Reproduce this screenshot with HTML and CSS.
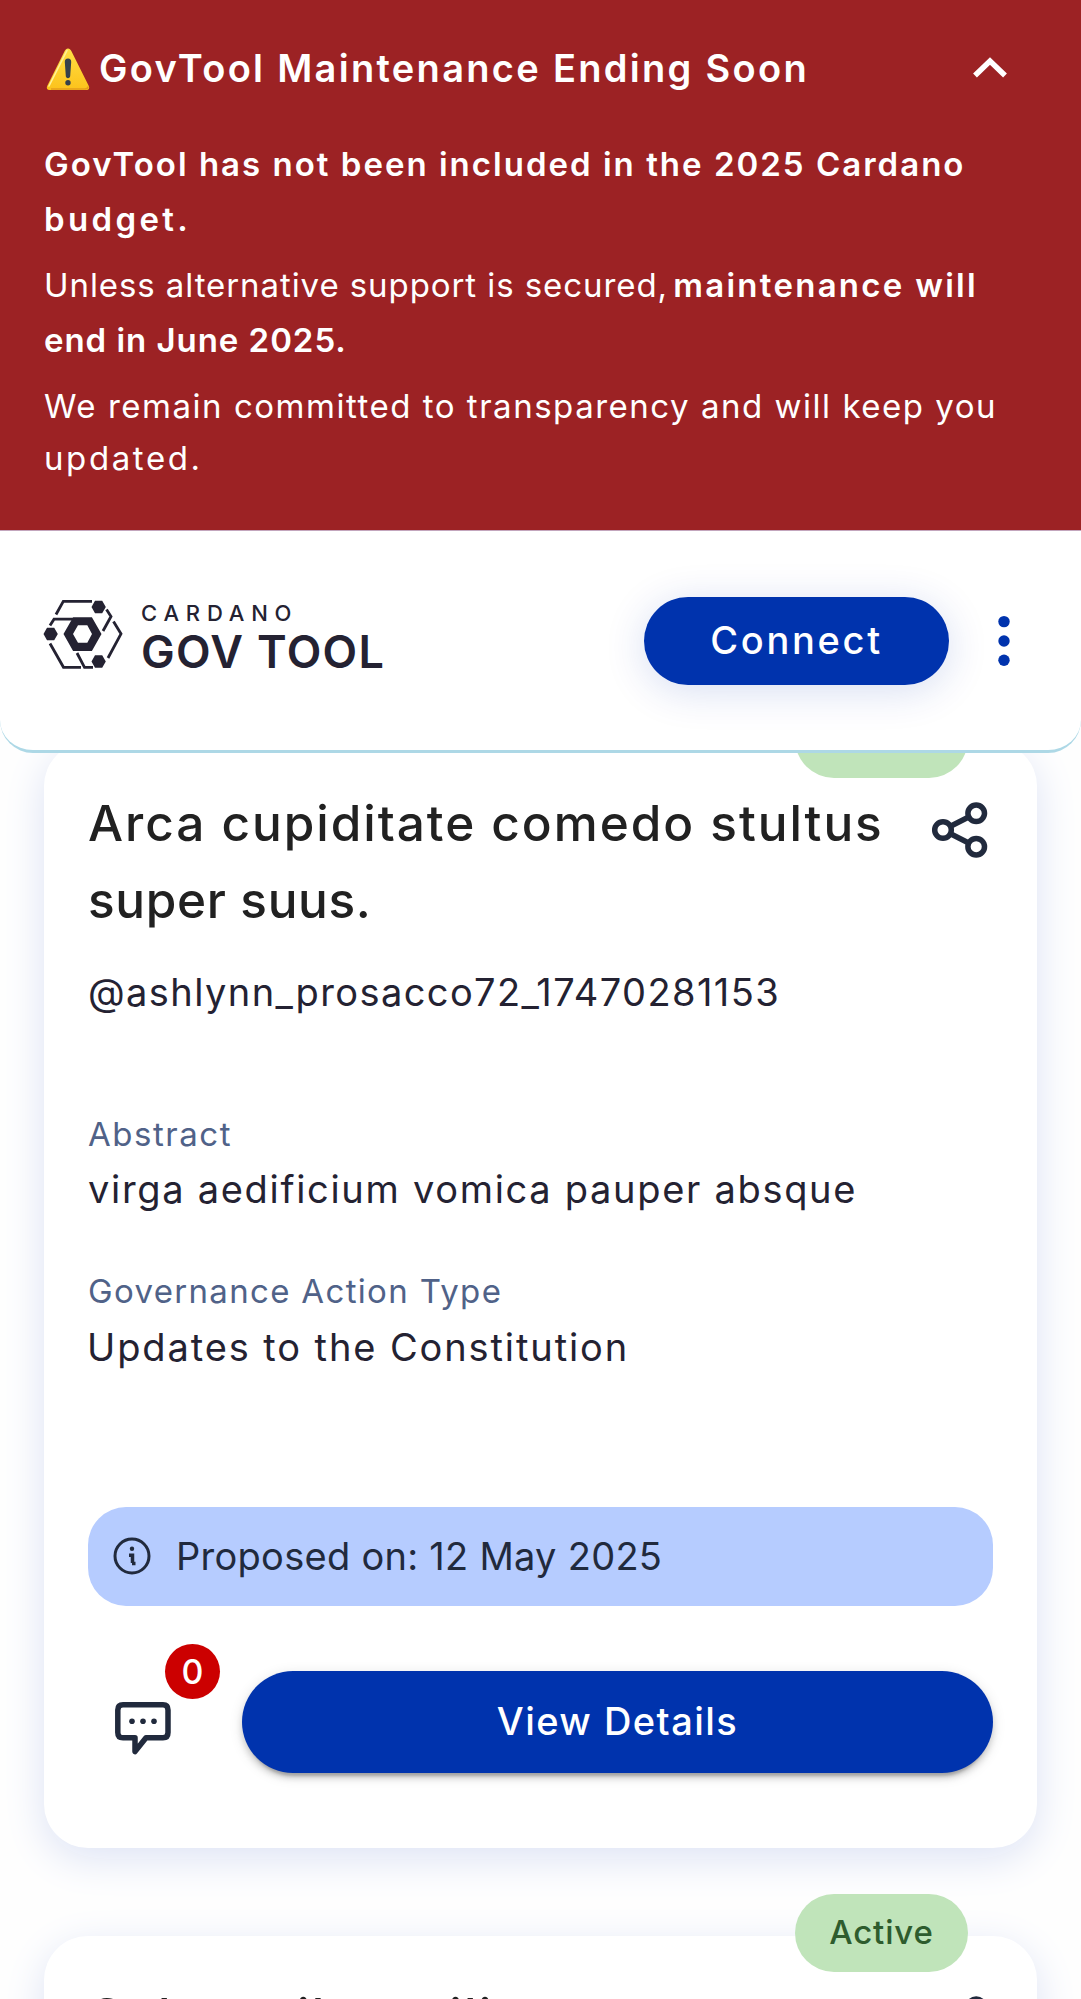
FILE: index.html
```html
<!DOCTYPE html>
<html lang="en">
<head>
<meta charset="utf-8">
<title>GovTool</title>
<link rel="stylesheet" href="styles.css">
</head>
<body>
<section class="banner">
  <div class="banner-head">
    <svg class="warning" width="44" height="44" viewBox="0 0 44 44">
      <defs><linearGradient id="amber" x1="0" y1="0" x2="0" y2="1"><stop offset="0" stop-color="#ffdf45"/><stop offset="1" stop-color="#fcc21b"/></linearGradient></defs>
      <path d="M22 1.500c1.500 0 2.500 1 3.200 2.300L42.800 39c1 2 .2 4-2.300 4h-37C1 43 .2 41 1.200 39L18.800 3.800C19.500 2.500 20.500 1.500 22 1.500z" fill="url(#amber)"/>
      <path d="M21 3.500L3 39" stroke="#fff199" stroke-width="1.600" stroke-linecap="round"/>
      <path d="M42 39.500q0 2.500-3 2.500H5" stroke="#e59d1b" stroke-width="1.500" fill="none"/>
      <path d="M22 11.500c2.200 0 3.300 1.300 3.200 3.400l-1 14.200c-.1 1.400-1 2.100-2.200 2.100s-2.100-.7-2.200-2.100l-1-14.200c-.1-2.100 1-3.400 3.200-3.400z" fill="#35404b"/>
      <circle cx="22" cy="35.700" r="2.700" fill="#35404b"/>
    </svg>
    <h1 class="banner-title">GovTool Maintenance Ending Soon</h1>
    <svg class="chevron" width="36" height="22" viewBox="0 0 36 22"><path d="M3 18.500L18 4l15 14.500" fill="none" stroke="#fff" stroke-width="5.500"/></svg>
  </div>
  <p class="para strong"><span class="ls-a">GovTool has not been included in the 2025 Cardano</span><br><span class="ls-b">budget.</span></p>
  <p class="para"><span class="ls-c">Unless alternative support is secured,</span> <b class="ls-d">maintenance will</b><br><b class="ls-e">end in June 2025.</b></p>
  <p class="para last"><span class="ls-f">We remain committed to transparency and will keep you</span><br><span class="ls-g">updated.</span></p>
</section>
<header class="header">
  <div class="logo">
    <svg width="80" height="70" viewBox="0 0 80 70" fill="none" stroke="#242232" stroke-width="2.800">
      <path d="M13 15.500L20.300 2.400H49M63.500 10.500L68 17.500 60 32M7 26.500L11 20.200H30M7 44.500L20.500 68.300H38M34 54L41.500 68.300H50M70.500 22.500L78 34.800 65 59"/>
      <g fill="#242232" stroke="none">
        <path d="M48.500 8l3.500-6.300h7.200L62.800 8l-3.600 6.300H52zM.5 35l3.500-6.300h7.200L14.800 35l-3.600 6.300H4zM48.500 62.500l3.500-6.300h7.200l3.600 6.300-3.600 6.300H52z"/>
        <path fill-rule="evenodd" d="M20.500 35l9.600-16.800h18.800L58.500 35l-9.600 17H30.100zM30 35l5 8.700h9.300L49 35l-4.700-8.700H35z"/>
      </g>
    </svg>
    <div class="wordmark"><span class="brand">CARDANO</span><span class="product">GOV TOOL</span></div>
  </div>
  <button class="connect">Connect</button>
  <svg class="menu" width="14" height="52" viewBox="0 0 14 52" fill="#0033ad"><circle cx="7" cy="6.600" r="5.700"/><circle cx="7" cy="26" r="5.700"/><circle cx="7" cy="45.200" r="5.700"/></svg>
</header>
<main class="list">
  <article class="card">
    <span class="status">Active</span>
    <div class="card-head">
      <h2 class="title"><span class="ls-h">Arca cupiditate comedo stultus</span><br><span class="ls-i">super suus.</span></h2>
      <svg class="share" width="58" height="58" viewBox="0 0 58 58" fill="none" stroke="#212a3d" stroke-width="5.500"><circle cx="12" cy="29" r="8.300"/><circle cx="45.200" cy="12.300" r="8.300"/><circle cx="45.200" cy="45.700" r="8.300"/><path d="M19.500 25.200L37.700 16M19.500 32.800L37.700 42"/></svg>
    </div>
    <p class="value author">@ashlynn_prosacco72_17470281153</p>
    <p class="label ls-k">Abstract</p>
    <p class="value abstract">virga aedificium vomica pauper absque</p>
    <p class="label type-label">Governance Action Type</p>
    <p class="value type">Updates to the Constitution</p>
    <div class="proposed">
      <svg width="38" height="38" viewBox="0 0 38 38" fill="none" stroke="#212a3d"><circle cx="19" cy="19" r="17" stroke-width="3"/><path d="M16 18.300h3.500V26M19 26.500h3.500" stroke-width="3.500"/><circle cx="19" cy="11.800" r="2.200" fill="#212a3d" stroke="none"/></svg>
      <span>Proposed on: 12 May 2025</span>
    </div>
    <div class="actions">
      <div class="comments">
        <svg width="56" height="54" viewBox="0 0 56 54" fill="none" stroke="#212a3d" stroke-width="5.500" stroke-linejoin="round"><path d="M8 2.800H48Q53 2.800 53 8V30.500Q53 35.800 48 35.800H31L20 49.500V35.800H8Q2.800 35.800 2.800 30.500V8Q2.800 2.800 8 2.800z"/><g fill="#212a3d" stroke="none"><circle cx="17" cy="19.300" r="2.800"/><circle cx="28" cy="19.300" r="2.800"/><circle cx="39" cy="19.300" r="2.800"/></g></svg>
        <span class="count">0</span>
      </div>
      <button class="details">View Details</button>
    </div>
  </article>
  <article class="card">
    <span class="status">Active</span>
    <div class="card-head">
      <h2 class="title next">Celo a vila maili</h2>
      <svg class="share" width="58" height="58" viewBox="0 0 58 58" fill="none" stroke="#212a3d" stroke-width="5.500"><circle cx="12" cy="29" r="8.300"/><circle cx="45.200" cy="12.300" r="8.300"/><circle cx="45.200" cy="45.700" r="8.300"/><path d="M19.500 25.200L37.700 16M19.500 32.800L37.700 42"/></svg>
    </div>
  </article>
</main>
</body>
</html>
```
FILE: styles.css
```css
* { box-sizing: border-box; }
html { overflow: hidden; }
body {
  margin: 0;
  height: 1999px;
  overflow: hidden;
  background: #fefefe;
  font-family: Inter, "Open Sans", sans-serif;
  color: #242232;
}
h1, h2, p { margin: 0; }
button { border: 0; padding: 0; font-family: inherit; color: #fff; background: #0033ad; }
svg { display: block; flex: none; }

/* Maintenance banner */
.banner {
  height: 531px;
  padding: 0 44px;
  color: #fff;
  background: #9c2224;
  border-bottom: 1px solid #c3a6bd;
}
.banner-head { display: flex; align-items: center; height: 137px; padding-right: 29px; }
.warning { margin-left: 2px; }
.banner-title { flex: 1; margin: -2px 0 0 9px; font-size: 38px; font-weight: 600; letter-spacing: 2.300px; white-space: nowrap; }
.chevron { margin-top: -1px; }
.para { margin-bottom: 11px; font-size: 33px; line-height: 55px; white-space: nowrap; }
.para b, .strong { font-weight: 600; }
.para.last { margin-top: 12px; line-height: 52px; }
.ls-a { letter-spacing: 2.010px; }
.ls-b { letter-spacing: 3.350px; }
.ls-c { letter-spacing: .920px; margin-right: -4px; }
.ls-d { letter-spacing: 2.270px; }
.ls-e { letter-spacing: .960px; }
.ls-f { letter-spacing: 1.520px; }
.ls-g { letter-spacing: 2.600px; }

/* Top bar */
.header {
  position: relative;
  z-index: 1;
  display: flex;
  align-items: center;
  height: 222px;
  padding: 0 70px 0 44px;
  background: #fff;
  border-bottom: 3px solid #add8e6;
  border-radius: 0 0 33px 33px;
}
.logo { display: flex; align-items: center; gap: 18px; margin: -14px 0 0 -1px; flex: 1; }
.wordmark { display: flex; flex-direction: column; padding-top: 8px; }
.brand { font-size: 22px; line-height: 27px; font-weight: 500; letter-spacing: 6.800px; }
.product { font-size: 45px; line-height: 49px; font-weight: 600; letter-spacing: 1.340px; }
.connect {
  width: 305px;
  height: 88px;
  margin-right: 48px;
  padding-bottom: 1px;
  border-radius: 44px;
  font-size: 38px;
  font-weight: 500;
  letter-spacing: 2.700px;
  box-shadow: 0 6px 41px rgba(0, 51, 173, .16);
}

/* Proposal cards */
.list { display: flex; flex-direction: column; gap: 88px; margin: -11px 44px 0; }
.card {
  position: relative;
  height: 1106px;
  padding: 43px 44px 0;
  background: #fff;
  border-radius: 44px;
  box-shadow: 0 11px 41px #dde3f5;
  flex: none;
}
.status {
  position: absolute;
  top: -42px;
  right: 69px;
  width: 173px;
  height: 78px;
  border-radius: 39px;
  line-height: 77px;
  text-align: center;
  font-size: 33px;
  font-weight: 500;
  letter-spacing: .870px;
  color: #2e5c2e;
  background: #c0e4ba;
}
.card-head { display: flex; justify-content: space-between; }
.title { font-size: 49.500px; line-height: 77px; font-weight: 500; color: #212121; white-space: nowrap; }
.share { margin: 16px 4px 0 0; }
.ls-h { letter-spacing: 1.960px; }
.ls-i { letter-spacing: .650px; }
.next { margin-top: -1px; letter-spacing: 2.300px; }
.value { font-size: 38px; line-height: 56px; white-space: nowrap; }
.label { font-size: 33px; line-height: 44px; color: #506288; white-space: nowrap; }
.author { margin-top: 25px; letter-spacing: 1.410px; }
.ls-k { margin-top: 92px; letter-spacing: 1.530px; }
.abstract { margin-top: 5px; letter-spacing: 1.690px; }
.type-label { margin-top: 52px; letter-spacing: 1.330px; }
.type { margin-top: 6px; margin-left: -1px; letter-spacing: 1.900px; }
.proposed {
  display: flex;
  align-items: center;
  gap: 25px;
  height: 99px;
  margin-top: 132px;
  padding: 0 0 1px 25px;
  border-radius: 38px;
  background: #b6ccff;
  color: #212a3d;
  font-size: 38px;
  letter-spacing: .270px;
}
.actions { display: flex; justify-content: space-between; margin-top: 65px; }
.comments { position: relative; padding: 31px 0 0 27px; }
.count {
  position: absolute;
  left: 77px;
  top: -27px;
  width: 55px;
  height: 55px;
  border-radius: 50%;
  line-height: 55px;
  text-align: center;
  font-size: 34px;
  font-weight: 500;
  color: #fff;
  background: #c00;
}
.details {
  width: 751px;
  height: 102px;
  padding-bottom: 2px;
  border-radius: 51px;
  font-size: 38px;
  font-weight: 500;
  letter-spacing: 1.460px;
  box-shadow: 0 8px 3px -5px rgba(0, 0, 0, .2), 0 5px 6px rgba(0, 0, 0, .14), 0 3px 14px rgba(0, 0, 0, .12);
}
```
